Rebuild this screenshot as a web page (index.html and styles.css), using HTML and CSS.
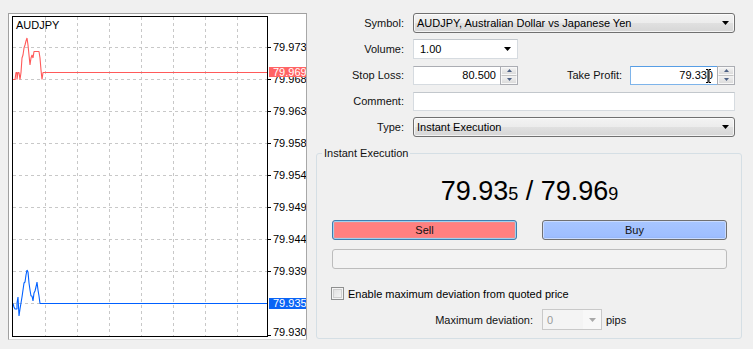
FILE: index.html
```html
<!DOCTYPE html>
<html>
<head>
<meta charset="utf-8">
<link rel="stylesheet" href="styles.css">
</head>
<body>
<div class="window">
  <div class="chart-panel">
    <svg class="chart" width="297" height="325" viewBox="9 14 297 325" xmlns="http://www.w3.org/2000/svg">
      <rect x="9" y="14" width="297" height="325" fill="#fff"/>
      <g stroke="#c8c8c8" stroke-width="1" stroke-dasharray="3 3">
        <line x1="45.5" y1="17" x2="45.5" y2="336"/>
        <line x1="77.5" y1="17" x2="77.5" y2="336"/>
        <line x1="109.5" y1="17" x2="109.5" y2="336"/>
        <line x1="141.5" y1="17" x2="141.5" y2="336"/>
        <line x1="173.5" y1="17" x2="173.5" y2="336"/>
        <line x1="205.5" y1="17" x2="205.5" y2="336"/>
        <line x1="237.5" y1="17" x2="237.5" y2="336"/>
        <line x1="13" y1="47.5" x2="267" y2="47.5"/>
        <line x1="13" y1="79.5" x2="267" y2="79.5"/>
        <line x1="13" y1="111.5" x2="267" y2="111.5"/>
        <line x1="13" y1="143.5" x2="267" y2="143.5"/>
        <line x1="13" y1="175.5" x2="267" y2="175.5"/>
        <line x1="13" y1="207.5" x2="267" y2="207.5"/>
        <line x1="13" y1="239.5" x2="267" y2="239.5"/>
        <line x1="13" y1="271.5" x2="267" y2="271.5"/>
        <line x1="13" y1="303.5" x2="267" y2="303.5"/>
      </g>
      <g stroke="#000" stroke-width="1">
        <line x1="268" y1="47.5" x2="271" y2="47.5"/>
        <line x1="268" y1="79.5" x2="271" y2="79.5"/>
        <line x1="268" y1="111.5" x2="271" y2="111.5"/>
        <line x1="268" y1="143.5" x2="271" y2="143.5"/>
        <line x1="268" y1="175.5" x2="271" y2="175.5"/>
        <line x1="268" y1="207.5" x2="271" y2="207.5"/>
        <line x1="268" y1="239.5" x2="271" y2="239.5"/>
        <line x1="268" y1="271.5" x2="271" y2="271.5"/>
        <line x1="268" y1="335.5" x2="271" y2="335.5"/>
      </g>
      <g class="axis-text" fill="#000">
        <text x="273" y="51">79.973</text>
        <text x="273" y="83">79.968</text>
        <text x="273" y="115">79.963</text>
        <text x="273" y="147">79.958</text>
        <text x="273" y="179">79.954</text>
        <text x="273" y="211">79.949</text>
        <text x="273" y="243">79.944</text>
        <text x="273" y="275">79.939</text>
        <text x="273" y="336">79.930</text>
      </g>
      <text class="axis-text" x="16" y="29" fill="#000">AUDJPY</text>
      <polyline fill="none" stroke="#ff5a5a" stroke-width="1.1" stroke-linejoin="bevel" points="13,79.5 15,79.5 16,72.5 17,72.5 17,79.5 18,72.5 19,72.5 20,79.5 21,72.5 22,58 23,55 24,48 25,45 26,41 27,38 28,45 29,55 30,65 31,58 32,55 33,58 34,51.5 35,51.5 39,51.5 40,58 41,70 42,79.5 43,72.5 268,72.5"/>
      <polyline fill="none" stroke="#0060ff" stroke-width="1.1" stroke-linejoin="bevel" points="13,303.5 14,307 15,309 17,309 17,303 18,297 19,316 20,309 21,303 22,297 23,290 24,283 25,282 26,275 27,270 28,272 29,283 30,290 31,296 32,296 33,301 34,293 35,291 36,287 37,282 38,290 39,296 40,303.5 268,303.5"/>
      <rect x="12.5" y="16.5" width="255" height="320" fill="none" stroke="#000" stroke-width="1"/>
      <rect x="269" y="67" width="37" height="10" fill="#ff6464"/>
      <text class="axis-text" x="273" y="76" fill="#fff">79.969</text>
      <rect x="269" y="298" width="37" height="11" fill="#0a64f5"/>
      <text class="axis-text" x="273" y="307" fill="#fff">79.935</text>
    </svg>
  </div>

  <div class="order-form">
    <div class="row">
      <span class="lbl">Symbol:</span>
      <div class="combo">
        <span class="combo-text">AUDJPY, Australian Dollar vs Japanese Yen</span>
        <svg class="arrow" width="7" height="4" viewBox="0 0 7 4"><path d="M0 0H7L3.5 4Z" fill="#000"/></svg>
      </div>
    </div>
    <div class="row">
      <span class="lbl">Volume:</span>
      <div class="edit-combo">
        <span class="edit-text">1.00</span>
        <svg class="arrow" width="7" height="4" viewBox="0 0 7 4"><path d="M0 0H7L3.5 4Z" fill="#000"/></svg>
      </div>
    </div>
    <div class="row">
      <span class="lbl">Stop Loss:</span>
      <div class="spin">
        <div class="spin-field">80.500</div>
        <div class="spin-buttons">
          <span class="spin-btn"><svg width="5" height="3" viewBox="0 0 5 3"><path d="M0 3H5L2.5 0Z" fill="#4d6185"/></svg></span>
          <span class="spin-btn"><svg width="5" height="3" viewBox="0 0 5 3"><path d="M0 0H5L2.5 3Z" fill="#4d6185"/></svg></span>
        </div>
      </div>
      <span class="lbl lbl-tp">Take Profit:</span>
      <div class="spin spin-focus">
        <div class="spin-field">79.330
          <svg class="ibeam" width="7" height="16" viewBox="0 0 7 16"><path d="M1 1.5H3V14.5H1M6 1.5H4V14.5H6" fill="none" stroke="#fff" stroke-width="2"/><path d="M1 1.5H3V14.5H1M6 1.5H4V14.5H6" fill="none" stroke="#000" stroke-width="1"/></svg>
        </div>
        <div class="spin-buttons">
          <span class="spin-btn"><svg width="5" height="3" viewBox="0 0 5 3"><path d="M0 3H5L2.5 0Z" fill="#4d6185"/></svg></span>
          <span class="spin-btn"><svg width="5" height="3" viewBox="0 0 5 3"><path d="M0 0H5L2.5 3Z" fill="#4d6185"/></svg></span>
        </div>
      </div>
    </div>
    <div class="row">
      <span class="lbl">Comment:</span>
      <div class="text-field"></div>
    </div>
    <div class="row">
      <span class="lbl">Type:</span>
      <div class="combo">
        <span class="combo-text">Instant Execution</span>
        <svg class="arrow" width="7" height="4" viewBox="0 0 7 4"><path d="M0 0H7L3.5 4Z" fill="#000"/></svg>
      </div>
    </div>

    <fieldset class="group">
      <legend>Instant Execution</legend>
      <div class="quote"><span class="q-big">79.93</span><span class="q-small">5</span><span class="q-big"> / 79.96</span><span class="q-small">9</span></div>
      <div class="trade-buttons">
        <div class="btn btn-sell">Sell</div>
        <div class="btn btn-buy">Buy</div>
      </div>
      <div class="progress"></div>
      <div class="check-row"><span class="checkbox"></span><span>Enable maximum deviation from quoted price</span></div>
      <div class="deviation-row">
        <span class="dev-label">Maximum deviation:</span>
        <div class="dev-combo">
          <span class="dev-text">0</span>
          <span class="dev-arrow"><svg width="7" height="4" viewBox="0 0 7 4"><path d="M0 0H7L3.5 4Z" fill="#a9a9a9"/></svg></span>
        </div>
        <span class="pips">pips</span>
      </div>
    </fieldset>
  </div>
</div>
</body>
</html>
```
FILE: styles.css
```css
html, body {
  margin: 0;
  padding: 0;
  background: #f0f0f0;
}
body {
  font-family: "Liberation Sans", Arial, sans-serif;
  font-size: 11px;
  color: #000;
  width: 753px;
  height: 349px;
  overflow: hidden;
}
.window {
  display: flex;
  align-items: flex-start;
  padding-top: 13px;
}
.chart-panel {
  margin-left: 8px;
  width: 297px;
  height: 325px;
  border: 1px solid #a0a0a0;
  border-right-color: #a8a8a8;
  border-bottom-color: #d8d8d8;
  background: #fff;
}
.chart {
  display: block;
}
.axis-text {
  font-family: "Liberation Sans", Arial, sans-serif;
  font-size: 11px;
}
.order-form {
  margin-left: 9px;
  width: 426px;
  display: flex;
  flex-direction: column;
}
.row {
  display: flex;
  align-items: center;
  height: 20px;
  margin-bottom: 6px;
}
.lbl {
  width: 88px;
  margin-right: 9px;
  text-align: right;
  color: #111;
}
.lbl-tp {
  width: 104px;
  margin-right: 8px;
}
.combo {
  box-sizing: border-box;
  width: 322px;
  height: 20px;
  border: 1px solid #707070;
  border-radius: 3px;
  background: linear-gradient(#f3f3f3 0%, #ececec 50%, #e0e0e0 51%, #d6d6d6 100%);
  box-shadow: inset 0 0 0 1px rgba(255,255,255,0.7);
  display: flex;
  align-items: center;
  justify-content: space-between;
  padding: 0 3px 0 3px;
}
.arrow {
  display: block;
  margin-right: 2px;
}
.edit-combo {
  box-sizing: border-box;
  width: 105px;
  height: 20px;
  border: 1px solid #d6dbe0;
  border-top-color: #c2c7cc;
  background: #fff;
  display: flex;
  align-items: center;
  justify-content: space-between;
  padding: 0 4px 0 6px;
}
.spin {
  box-sizing: border-box;
  width: 105px;
  height: 19px;
  display: flex;
}
.spin-field {
  position: relative;
  flex: 1;
  box-sizing: border-box;
  height: 19px;
  border: 1px solid #d6dbe0;
  border-top-color: #abadb3;
  border-right: none;
  background: #fff;
  text-align: right;
  line-height: 17px;
  padding-right: 4px;
}
.spin-focus .spin-field {
  border-color: #7eb4ea;
  border-top-color: #569de5;
}
.ibeam {
  position: absolute;
  right: 5px;
  top: 1px;
}
.spin-buttons {
  width: 18px;
  height: 19px;
  display: flex;
  flex-direction: column;
  box-sizing: border-box;
  border: 1px solid #abadb3;
}
.spin-btn {
  flex: 1;
  display: flex;
  align-items: center;
  justify-content: center;
  background: linear-gradient(#f2f2f2, #dcdcdc);
  border: 1px solid #f8f8f8;
}
.spin-btn + .spin-btn {
  border-top: 1px solid #c4c4c4;
}
.text-field {
  box-sizing: border-box;
  width: 322px;
  height: 19px;
  border: 1px solid #d6dbe0;
  border-top-color: #c2c7cc;
  background: #fff;
}
.group {
  box-sizing: border-box;
  margin: 4px 0 0 0;
  padding: 0 14px 8px 15px;
  width: 426px;
  min-width: 0;
  border: 1px solid #d5dfe5;
  border-radius: 3px;
}
.group legend {
  margin-left: -10px;
  padding: 0 2px;
  line-height: 13px;
  color: #111;
}
.quote {
  margin-top: 11px;
  height: 40px;
  line-height: 40px;
  text-align: center;
  white-space: pre;
}
.q-big {
  font-size: 27px;
}
.q-small {
  font-size: 18px;
}
.trade-buttons {
  margin-top: 9px;
  display: flex;
  gap: 25px;
}
.btn {
  box-sizing: border-box;
  width: 185px;
  height: 20px;
  border-radius: 3px;
  display: flex;
  align-items: center;
  justify-content: center;
  color: #111;
}
.btn-sell {
  border: 1px solid #3c7fb1;
  background: #ff8080;
  box-shadow: inset 0 0 0 1px #9fd0ee, inset 0 0 0 2px #f38a8a;
}
.btn-buy {
  border: 1px solid #707070;
  background: linear-gradient(#a8c6ff, #9ebeff 85%, #8fb0f2);
  box-shadow: inset 0 0 0 1px #c9dbff;
}
.progress {
  box-sizing: border-box;
  margin-top: 9px;
  height: 20px;
  border: 1px solid #bcbcbc;
  border-radius: 3px;
  background: #f3f3f3;
}
.check-row {
  margin-top: 18px;
  height: 13px;
  display: flex;
  align-items: center;
  gap: 4px;
  margin-left: -1px;
}
.checkbox {
  box-sizing: border-box;
  width: 13px;
  height: 13px;
  border: 1px solid #8e8f8f;
  background: linear-gradient(135deg, #dcdcdc, #f8f8f8);
  box-shadow: inset 0 0 0 1px #f4f4f4, inset 0 0 0 2px #cfcfcf;
}
.deviation-row {
  margin-top: 9px;
  height: 21px;
  display: flex;
  align-items: center;
}
.dev-label {
  width: 201px;
  text-align: right;
  margin-right: 9px;
  color: #111;
}
.dev-combo {
  box-sizing: border-box;
  width: 60px;
  height: 21px;
  border: 1px solid #c9c9c9;
  background: #f4f4f4;
  display: flex;
  align-items: center;
}
.dev-text {
  flex: 1;
  padding-left: 4px;
  color: #9a9a9a;
}
.dev-arrow {
  width: 18px;
  height: 19px;
  display: flex;
  align-items: center;
  justify-content: center;
  background: #f8f8f8;
}
.pips {
  margin-left: 4px;
  color: #111;
}
```
